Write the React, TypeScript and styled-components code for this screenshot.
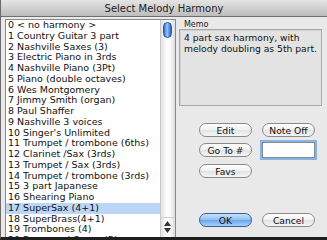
import React from "react";
import styled, { createGlobalStyle } from "styled-components";

const Global = createGlobalStyle`
  html, body { margin: 0; padding: 0; background: #e8e8e8; }
  * { box-sizing: border-box; }
`;

const Window = styled.div`
  width: 327px;
  height: 240px;
  display: flex;
  flex-direction: column;
  background: #e9e9e9;
  border-left: 1px solid #6b6b6b;
  border-bottom: 3px solid #1e1e1e;
  font-family: "DejaVu Sans", "Liberation Sans", sans-serif;
  color: #111;
  overflow: hidden;
`;

const TitleBar = styled.div`
  height: 17px;
  flex: none;
  display: flex;
  align-items: center;
  justify-content: center;
  background: linear-gradient(#e4e4e4, #bdbdbd);
  border-bottom: 1px solid #6f6f6f;
  font-size: 10px;
  color: #222;
`;

const Body = styled.div`
  flex: 1;
  display: flex;
  padding: 2px 5px 0 4px;
  gap: 2px;
  min-height: 0;
`;

const ListFrame = styled.div`
  width: 177px;
  display: flex;
  border: 1px solid #8a8a8a;
  border-bottom: none;
  background: #fff;
  min-height: 0;
`;

const List = styled.div`
  flex: 1;
  overflow: hidden;
  border-right: 1px solid #c8c8c8;
`;

const Row = styled.div<{ $sel?: boolean }>`
  height: 10.75px;
  line-height: 10.75px;
  padding-left: 2px;
  font-size: 9.5px;
  white-space: nowrap;
  background: ${(p) => (p.$sel ? "#bcd6f7" : "transparent")};
`;

const ScrollBar = styled.div`
  width: 14px;
  flex: none;
  position: relative;
  background: linear-gradient(90deg, #e2e2e2, #ffffff 45%, #f6f6f6 70%, #dcdcdc);
`;

const Thumb = styled.div`
  position: absolute;
  left: 2px;
  top: 2px;
  width: 9px;
  height: 16px;
  border-radius: 5px;
  background: linear-gradient(90deg, #2f6cc8, #9cc7f8 45%, #5f98e6 70%, #2a63bd);
  border: 1px solid #2a579c;
`;

const Arrows = styled.div`
  position: absolute;
  left: 0;
  bottom: 0;
  width: 14px;
  display: flex;
  flex-direction: column;
  align-items: center;
  gap: 2px;
  padding-bottom: 4px;
  padding-top: 3px;
  border-top: 1px solid #d0d0d0;
`;

const Right = styled.div`
  flex: 1;
  display: flex;
  flex-direction: column;
  padding-left: 1px;
`;

const MemoLabel = styled.div`
  font-size: 8px;
  padding-left: 5px;
  height: 10px;
  line-height: 11px;
  color: #222;
`;

const MemoBox = styled.div`
  height: 77px;
  border: 1px solid #a8a8a8;
  background: #e3e3e3;
  box-shadow: inset 1px 1px 0 #d0d0d0;
  padding: 3px 4px;
  font-size: 9.2px;
  line-height: 10.5px;
  white-space: nowrap;
`;

const ButtonGrid = styled.div`
  display: grid;
  grid-template-columns: 53px 53px;
  column-gap: 10px;
  row-gap: 6px;
  margin-top: 17px;
  margin-left: 20px;
`;

const Button = styled.div<{ $primary?: boolean }>`
  height: 14px;
  border-radius: 7px;
  border: 1px solid ${(p) => (p.$primary ? "#36609e" : "#8a8a8a")};
  background: ${(p) =>
    p.$primary
      ? "linear-gradient(#c9e2fb, #8ebdf1 50%, #6aa6ea 51%, #a7d2fb)"
      : "linear-gradient(#ffffff, #f0f0f0 50%, #e2e2e2 51%, #f6f6f6)"};
  display: flex;
  align-items: center;
  justify-content: center;
  font-size: 9.2px;
  color: #111;
`;

const Input = styled.div`
  height: 16px;
  margin-top: -1px;
  border: 1px solid #8a8a8a;
  background: #fff;
  box-shadow: 0 0 0 2px #86b3e8;
`;

const Spacer = styled.div``;

const BottomRow = styled.div`
  display: flex;
  gap: 10px;
  margin-left: 20px;
  margin-top: auto;
  margin-bottom: 10px;
  & > * { width: 53px; }
`;

const items = [
  "0 < no harmony >",
  "1 Country Guitar 3 part",
  "2 Nashville Saxes (3)",
  "3 Electric Piano in 3rds",
  "4 Nashville Piano (3Pt)",
  "5 Piano (double octaves)",
  "6 Wes Montgomery",
  "7 Jimmy Smith (organ)",
  "8 Paul Shaffer",
  "9 Nashville 3 voices",
  "10 Singer's Unlimited",
  "11 Trumpet / trombone (6ths)",
  "12 Clarinet /Sax (3rds)",
  "13 Trumpet / Sax (3rds)",
  "14 Trumpet / trombone (3rds)",
  "15 3 part Japanese",
  "16 Shearing Piano",
  "17 SuperSax (4+1)",
  "18 SuperBrass(4+1)",
  "19 Trombones (4)",
  "20 Brass and Saxes (5)",
];

export default function App() {
  return (
    <>
      <Global />
      <Window>
        <TitleBar>Select Melody Harmony</TitleBar>
        <Body>
          <ListFrame>
            <List>
              {items.map((t, i) => (
                <Row key={t} $sel={i === 17}>
                  {t}
                </Row>
              ))}
            </List>
            <ScrollBar>
              <Thumb />
              <Arrows>
                <svg width="7" height="5" viewBox="0 0 7 5">
                  <path d="M3.5 0 L7 5 L0 5 Z" fill="#333" />
                </svg>
                <svg width="7" height="5" viewBox="0 0 7 5">
                  <path d="M0 0 L7 0 L3.5 5 Z" fill="#333" />
                </svg>
              </Arrows>
            </ScrollBar>
          </ListFrame>
          <Right>
            <MemoLabel>Memo</MemoLabel>
            <MemoBox>
              4 part sax harmony, with
              <br />
              melody doubling as 5th part.
            </MemoBox>
            <ButtonGrid>
              <Button>Edit</Button>
              <Button>Note Off</Button>
              <Button>Go To #</Button>
              <Input />
              <Button>Favs</Button>
              <Spacer />
            </ButtonGrid>
            <BottomRow>
              <Button $primary>OK</Button>
              <Button>Cancel</Button>
            </BottomRow>
          </Right>
        </Body>
      </Window>
    </>
  );
}
